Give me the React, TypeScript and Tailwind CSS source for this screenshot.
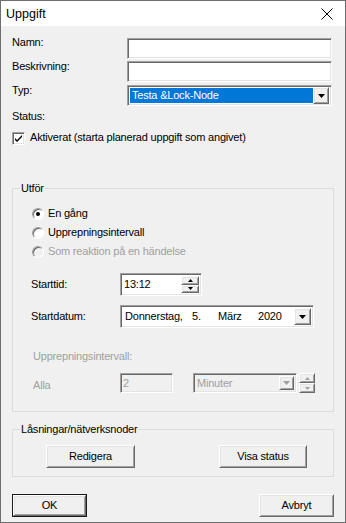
import React from "react";

const sunken =
  "border border-t-[#a0a0a0] border-l-[#a0a0a0] border-r-white border-b-white shadow-[inset_1px_1px_0_#696969,inset_-1px_-1px_0_#e3e3e3]";
const raised =
  "border border-t-white border-l-white border-r-[#696969] border-b-[#696969] shadow-[inset_1px_1px_0_#e3e3e3,inset_-1px_-1px_0_#a0a0a0] bg-[#f0f0f0]";

function DownArrow({ color = "#000" }: { color?: string }) {
  return (
    <svg width="7" height="4" viewBox="0 0 7 4">
      <path d="M0 0H7L3.5 4Z" fill={color} />
    </svg>
  );
}

function SmallTri({ up, color = "#000" }: { up?: boolean; color?: string }) {
  return (
    <svg width="5" height="3" viewBox="0 0 5 3">
      {up ? <path d="M0 3H5L2.5 0Z" fill={color} /> : <path d="M0 0H5L2.5 3Z" fill={color} />}
    </svg>
  );
}

function Spin({ color = "#000" }: { color?: string }) {
  return (
    <div className="flex flex-col w-[18px] h-full">
      <div className={`${raised} flex-1 flex items-center justify-center`}>
        <SmallTri up color={color} />
      </div>
      <div className={`${raised} flex-1 flex items-center justify-center`}>
        <SmallTri color={color} />
      </div>
    </div>
  );
}

function Radio({ checked, disabled }: { checked?: boolean; disabled?: boolean }) {
  return (
    <div
      className={`w-[12px] h-[12px] rounded-full border border-t-[#a0a0a0] border-l-[#a0a0a0] border-r-white border-b-white flex items-center justify-center shadow-[inset_1px_1px_0_#696969] ${
        disabled ? "bg-[#f0f0f0]" : "bg-white"
      }`}
    >
      {checked && <div className="w-[4px] h-[4px] rounded-full bg-black" />}
    </div>
  );
}

function Btn({ label, w, isDefault }: { label: string; w: string; isDefault?: boolean }) {
  const inner = (
    <div className={`${raised} h-full flex items-center justify-center text-black`}>{label}</div>
  );
  return isDefault ? (
    <div className={`${w} h-[23px] border border-[#1a1a1a]`}>{inner}</div>
  ) : (
    <div className={`${w} h-[23px]`}>{inner}</div>
  );
}

export default function App() {
  return (
    <div className="w-[346px] h-[523px] bg-[#f0f0f0] border border-[#6e6e6e] flex flex-col font-['Liberation_Sans',Arial,sans-serif] text-[11px] leading-[13px] tracking-[-0.2px] text-black overflow-hidden">
      {/* Title bar */}
      <div className="h-[25px] bg-white flex items-center justify-between pl-[5px] pr-[12px] shrink-0">
        <span className="text-[12.5px] tracking-normal mt-[1px]">Uppgift</span>
        <svg width="12" height="12" viewBox="0 0 12 12" className="mt-[1px]">
          <path d="M0.5 0.5L11.5 11.5M11.5 0.5L0.5 11.5" stroke="#000" strokeWidth="1" />
        </svg>
      </div>

      {/* Body */}
      <div className="px-[11px] pt-[12px] flex flex-col">
        <div className="flex">
          <div className="w-[115px] -mt-[2px]">Namn:</div>
          <div className={`${sunken} w-[205px] h-[21px] bg-white`} />
        </div>
        <div className="flex mt-[2px]">
          <div className="w-[115px] -mt-[1px]">Beskrivning:</div>
          <div className={`${sunken} w-[205px] h-[21px] bg-white`} />
        </div>
        <div className="flex mt-[3px]">
          <div className="w-[115px] -mt-[1px]">Typ:</div>
          <div className={`${sunken} w-[205px] h-[21px] bg-white flex items-center p-[2px]`}>
            <div className="flex-1 h-full bg-[#0078d7] text-white pl-[2px] flex items-center">
              Testa &amp;Lock-Node
            </div>
            <div className={`${raised} w-[16px] h-[17px] flex items-center justify-center`}>
              <DownArrow />
            </div>
          </div>
        </div>
        <div className="mt-[4px]">Status:</div>
        <div className="flex items-start mt-[9px] gap-[5px]">
          <div className={`${sunken} w-[13px] h-[13px] bg-white flex items-center justify-center shrink-0`}>
            <svg width="7" height="7" viewBox="0 0 7 7">
              <path d="M0 3L0 5L2 7L7 2L7 0L2 5Z" fill="#000" />
            </svg>
          </div>
          <div className="-mt-[1px]">Aktiverat (starta planerad uppgift som angivet)</div>
        </div>

        {/* Utför */}
        <fieldset className="mt-[37px] border border-[#dcdcdc] pb-[18px]">
          <legend className="ml-[7px] px-[1px] leading-[13px]">Utför</legend>
          <div className="flex flex-col pl-[18px] pt-[10px]">
            <div className="flex items-center h-[19px] gap-[4px] pl-[1px] -mt-[1px]">
              <Radio checked />
              <span>En gång</span>
            </div>
            <div className="flex items-center h-[19px] gap-[4px] pl-[1px]">
              <Radio />
              <span>Upprepningsintervall</span>
            </div>
            <div className="flex items-center h-[19px] gap-[4px] pl-[1px] text-[#a0a0a0]">
              <Radio disabled />
              <span>Som reaktion på en händelse</span>
            </div>

            <div className="flex items-center mt-[12px]">
              <div className="w-[89px]">Starttid:</div>
              <div className={`${sunken} w-[82px] h-[23px] bg-white flex p-[2px]`}>
                <div className="flex-1 flex items-center pl-[1px]">13:12</div>
                <Spin />
              </div>
            </div>

            <div className="flex items-center mt-[9px]">
              <div className="w-[89px]">Startdatum:</div>
              <div className={`${sunken} w-[194px] h-[23px] bg-white flex p-[2px]`}>
                <div className="flex-1 flex items-center pl-[2px]">
                  <span className="w-[67px]">Donnerstag,</span>
                  <span className="w-[26px]">5.</span>
                  <span className="w-[40px]">März</span>
                  <span>2020</span>
                </div>
                <div className={`${raised} w-[17px] h-full flex items-center justify-center`}>
                  <DownArrow />
                </div>
              </div>
            </div>

            <div className="mt-[22px] pl-[2px] text-[#a0a0a0]">Upprepningsintervall:</div>
            <div className="flex items-start mt-[10px] text-[#a0a0a0]">
              <div className="w-[89px] pl-[2px] mt-[6px]">Alla</div>
              <div className={`${sunken} w-[53px] h-[20px] bg-[#f0f0f0] flex items-center pl-[2px]`}>2</div>
              <div className={`${sunken} w-[104px] h-[20px] bg-[#f0f0f0] ml-[20px] flex p-[2px]`}>
                <div className="flex-1 flex items-center pl-[1px]">Minuter</div>
                <div className={`${raised} w-[15px] h-full flex items-center justify-center`}>
                  <DownArrow color="#a0a0a0" />
                </div>
              </div>
              <div className="h-[20px] ml-[2px] flex">
                <div className="flex flex-col w-[16px] h-full">
                  <div className={`${raised} flex-1 flex items-center justify-center`}>
                    <SmallTri up color="#a0a0a0" />
                  </div>
                  <div className={`${raised} flex-1 flex items-center justify-center`}>
                    <SmallTri color="#a0a0a0" />
                  </div>
                </div>
              </div>
            </div>
          </div>
        </fieldset>

        {/* Låsningar */}
        <fieldset className="mt-[11px] border border-[#dcdcdc] pb-[8px]">
          <legend className="ml-[7px] px-[1px] leading-[13px]">Låsningar/nätverksnoder</legend>
          <div className="flex pt-[9px] pl-[33px]">
            <Btn label="Redigera" w="w-[89px]" />
            <div className="ml-[84px]">
              <Btn label="Visa status" w="w-[88px]" />
            </div>
          </div>
        </fieldset>

        <div className="flex justify-between mt-[17px]">
          <Btn label="OK" w="w-[75px]" isDefault />
          <Btn label="Avbryt" w="w-[75px]" />
        </div>
      </div>
    </div>
  );
}
